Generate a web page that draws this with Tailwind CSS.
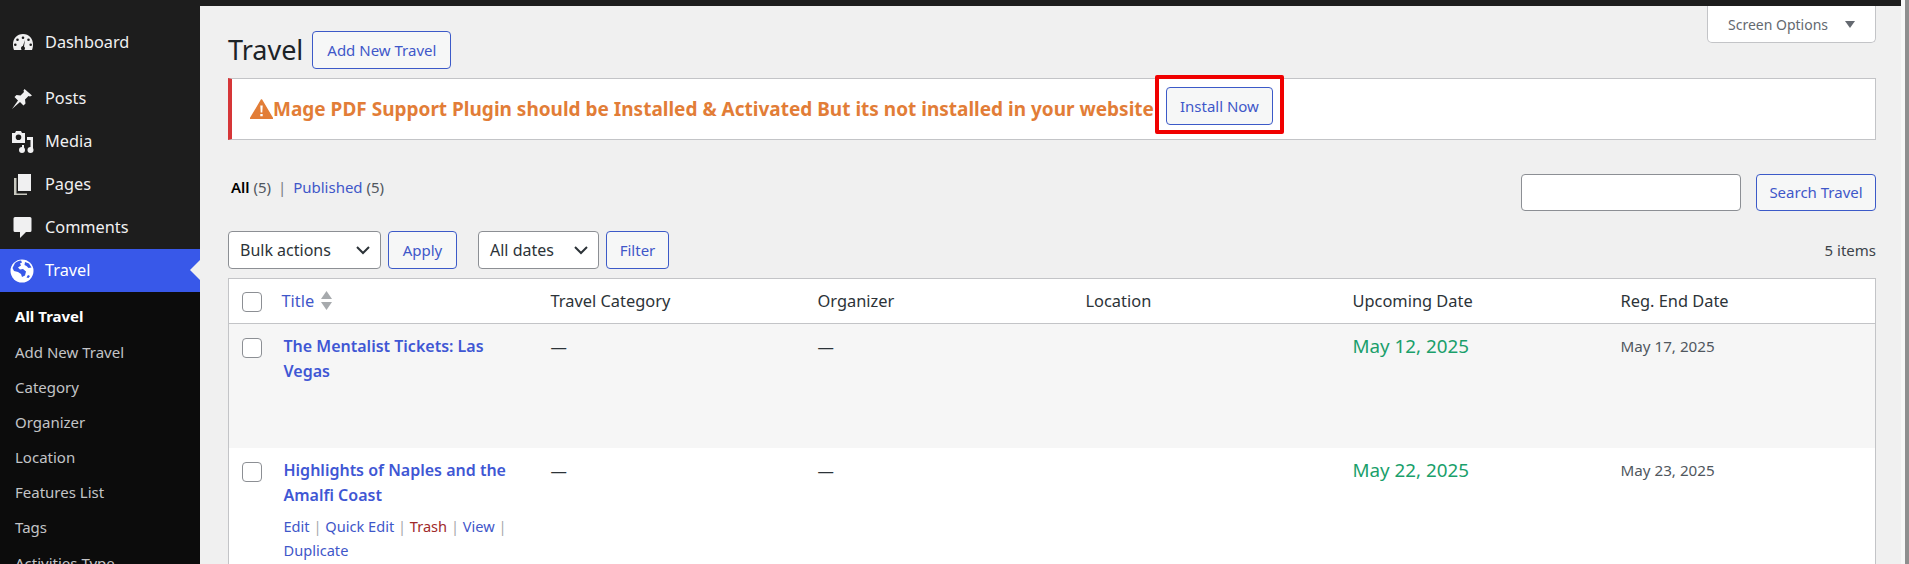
<!DOCTYPE html>
<html lang="en">
<head>
    <meta charset="UTF-8">
    <title>Travel</title>
    <script src="https://cdn.jsdelivr.net/npm/@tailwindcss/browser@4"></script>
</head>
<body class="h-[564px] overflow-hidden bg-[#f0f0f0] font-['Noto_Sans',sans-serif] text-[#2c3338]">
<div class="flex h-[564px] overflow-hidden">
    <!-- sidebar -->
    <aside class="w-[200px] shrink-0 overflow-hidden flex flex-col bg-[#1d1d1d] text-[16.3px] text-[#f0f0f1]">
        <div class="h-[24px] shrink-0"></div>
        <a class="flex items-center shrink-0 h-[37px] pl-[12px] gap-[11px]">
            <svg class="w-[22px] h-[18px]" viewBox="0 0 22 18" fill="#f0f0f1"><path fill-rule="evenodd" d="M11 0C5 0 1 4.500 1 10.500c0 2.500.5 4.500 1 5.500h18c.5-1 1-3 1-5.500C21 4.500 17 0 11 0zm0 2.500a1.300 1.300 0 1 1 0 2.600 1.300 1.300 0 0 1 0-2.600zM5.500 4.500a1.300 1.300 0 1 1 0 2.600 1.300 1.300 0 0 1 0-2.600zm11 0a1.300 1.300 0 1 1 0 2.600 1.300 1.300 0 0 1 0-2.600zM3.300 9.500a1.300 1.300 0 1 1 0 2.600 1.300 1.300 0 0 1 0-2.600zm15.400 0a1.300 1.300 0 1 1 0 2.600 1.300 1.300 0 0 1 0-2.600zM13 6l-1 6.500c.6.500 1 1.100 1 1.800 0 .7-.3 1.200-.7 1.700H9.700c-.4-.5-.7-1-.7-1.700 0-1.200.8-2 1.900-2.200z"/></svg>
            <span>Dashboard</span>
        </a>
        <div class="h-[16px] shrink-0"></div>
        <a class="flex items-center shrink-0 h-[43px] pl-[11px] gap-[12px]">
            <svg class="w-[22px] h-[22px]" viewBox="0 0 22 22" fill="#f0f0f1"><path d="M13.500 1l7.500 6.500-2 1-1.500-.5-3.500 3.500.5 4-2 2-3.500-3.500L1 21l6-8.500-3.500-3.500 2-2 4 .5L13 4l-.5-1.500z"/></svg>
            <span>Posts</span>
        </a>
        <a class="flex items-center shrink-0 h-[43px] pl-[11px] gap-[11px]">
            <svg class="w-[23px] h-[22px]" viewBox="0 0 23 22" fill="#f0f0f1"><path fill-rule="evenodd" d="M1 2h3l1-2h5l1 2h3v10H1zm6.500 1.500a2.800 2.800 0 1 0 0 5.600 2.800 2.800 0 0 0 0-5.600z"/><path d="M16 6h6v13h-2.500V9H16zM11 14h2v4h-2z"/><circle cx="11" cy="19" r="3"/><circle cx="19.500" cy="19" r="3"/></svg>
            <span>Media</span>
        </a>
        <a class="flex items-center shrink-0 h-[43px] pl-[13px] gap-[13px]">
            <svg class="w-[19px] h-[22px]" viewBox="0 0 19 22" fill="#f0f0f1"><path d="M5 0h13v17H5z"/><path d="M1 4h2.500v15.500H14V21H1z" fill="#c9c9c0"/></svg>
            <span>Pages</span>
        </a>
        <a class="flex items-center shrink-0 h-[43px] pl-[13px] gap-[13px]">
            <svg class="w-[19px] h-[21px]" viewBox="0 0 19 21" fill="#f0f0f1"><path d="M2 0h15a1.500 1.500 0 0 1 1.500 1.500v12A1.500 1.500 0 0 1 17 15h-4l-6 6v-6H2A1.500 1.500 0 0 1 .5 13.500v-12A1.500 1.500 0 0 1 2 0z"/></svg>
            <span>Comments</span>
        </a>
        <a class="relative flex items-center shrink-0 h-[43px] pl-[10px] gap-[11px] bg-[#3858e9] text-white">
            <svg class="w-[24px] h-[24px]" viewBox="0 0 24 24"><circle cx="12" cy="12" r="11.500" fill="#fff"/><path d="M5 4c2-1.500 4-2.500 6-2.500l1 2-2 1 1 2-3 2 2 2 3-.5 3 2.500-1 4-3 1.500-1-3-3-2-4-1-1.500-3 1-2zM15 3l4 1.500 2.500 4-3 .5-2-2-2-1zM18 16l2 1-1.500 2-2-.5z" fill="#3858e9"/></svg>
            <span>Travel</span>
            <span class="absolute right-0 top-[11px] border-y-[10px] border-y-transparent border-r-[10px] border-r-[#f0f0f0]"></span>
        </a>
        <nav class="flex-1 flex flex-col bg-[#0c0c0c] pt-[7px] text-[15px] text-[#c3c4c7]">
            <a class="flex items-center shrink-0 h-[35.2px] pl-[15px] font-bold text-white">All Travel</a>
            <a class="flex items-center shrink-0 h-[35.2px] pl-[15px]">Add New Travel</a>
            <a class="flex items-center shrink-0 h-[35.2px] pl-[15px]">Category</a>
            <a class="flex items-center shrink-0 h-[35.2px] pl-[15px]">Organizer</a>
            <a class="flex items-center shrink-0 h-[35.2px] pl-[15px]">Location</a>
            <a class="flex items-center shrink-0 h-[35.2px] pl-[15px]">Features List</a>
            <a class="flex items-center shrink-0 h-[35.2px] pl-[15px]">Tags</a>
            <a class="flex items-center shrink-0 h-[35.2px] pl-[15px]">Activities Type</a>
        </nav>
    </aside>

    <!-- main column -->
    <main class="flex-1 min-w-0 flex flex-col">
        <div class="h-[6px] shrink-0 bg-[#1d1d1d]"></div>
        <div class="relative pl-[28px] pr-[25px]">
            <button class="absolute right-[25px] top-0 flex items-center gap-[17px] w-[169px] h-[37px] pl-[20px] bg-white border border-t-0 border-[#c3c4c7] rounded-b-[5px] text-[14px] text-[#646970]">Screen Options <span class="border-x-[5px] border-x-transparent border-t-[7px] border-t-[#646970]"></span></button>

            <!-- heading -->
            <div class="flex items-center h-[38px] mt-[25px] gap-[9px]">
                <h1 class="text-[27px] text-[#1d2327]">Travel</h1>
                <a class="flex items-center justify-center w-[139px] h-[38px] border border-[#3c5ac8] rounded-[4px] bg-[#f6f7f7] text-[15px] text-[#3f57c9]">Add New Travel</a>
            </div>

            <!-- notice -->
            <div class="flex items-center h-[62px] mt-[9px] bg-white border border-[#c3c4c7] border-l-4 border-l-[#d63638] pl-[18px]">
                <svg class="w-[23px] h-[20px] shrink-0" viewBox="0 0 23 20"><path d="M11.500 1L22.500 19.500H.5z" fill="#e27d37" stroke="#e27d37" stroke-width="1.500" stroke-linejoin="round"/><path d="M10.300 6.500h2.400l-.4 7h-1.600zM10.300 15h2.400v2.300h-2.400z" fill="#fff"/></svg>
                <strong class="text-[19px] text-[#e27d37] whitespace-nowrap">Mage PDF Support Plugin should be Installed &amp; Activated But its not installed in your website</strong>
                <a class="relative flex items-center justify-center shrink-0 ml-[12px] w-[107px] h-[38px] -mt-[6px] border border-[#3c5ac8] rounded-[4px] bg-[#f6f7f7] text-[15px] text-[#3f57c9]">Install Now
                    <span class="absolute -left-[12px] -right-[12px] -top-[13px] -bottom-[10px] border-4 border-[#f00000] rounded-[2px]"></span>
                </a>
            </div>

            <!-- views and search -->
            <div class="flex items-start justify-between h-[57px] mt-[34px]">
                <div class="pt-[2px] pl-[3px] text-[15px] text-[#50575e]"><b class="font-semibold text-black">All</b> (5) <span class="mx-[3px] text-[#787c82]">|</span> <a class="text-[#3f57c9]">Published</a> (5)</div>
                <div class="flex gap-[15px]">
                    <input class="w-[220px] h-[37px] bg-white border border-[#8c8f94] rounded-[4px]">
                    <a class="flex items-center justify-center w-[120px] h-[37px] border border-[#3c5ac8] rounded-[4px] bg-[#f6f7f7] text-[15px] text-[#3f57c9]">Search Travel</a>
                </div>
            </div>

            <!-- bulk actions -->
            <div class="flex items-center h-[38px] gap-[7px]">
                <div class="flex items-center justify-between w-[153px] h-[38px] pl-[11px] pr-[9px] bg-white border border-[#8c8f94] rounded-[4px] text-[16px]">Bulk actions
                    <svg class="w-[16px] h-[16px]" viewBox="0 0 16 16" fill="none" stroke="#2c3338" stroke-width="2"><path d="M2 5l6 6 6-6"/></svg>
                </div>
                <a class="flex items-center justify-center w-[69px] h-[38px] border border-[#3c5ac8] rounded-[4px] bg-[#f6f7f7] text-[15px] text-[#3f57c9]">Apply</a>
                <div class="flex items-center justify-between w-[121px] h-[38px] ml-[14px] pl-[11px] pr-[9px] bg-white border border-[#8c8f94] rounded-[4px] text-[16px]">All dates
                    <svg class="w-[16px] h-[16px]" viewBox="0 0 16 16" fill="none" stroke="#2c3338" stroke-width="2"><path d="M2 5l6 6 6-6"/></svg>
                </div>
                <a class="flex items-center justify-center w-[63px] h-[38px] border border-[#3c5ac8] rounded-[4px] bg-[#f6f7f7] text-[15px] text-[#3f57c9]">Filter</a>
                <span class="ml-auto text-[15px] text-[#3c434a]">5 items</span>
            </div>

            <!-- list table -->
            <table class="table-fixed w-full mt-[9px] bg-white border border-[#c3c4c7] text-[16.4px]">
                <colgroup>
                    <col class="w-[42px]"><col class="w-[270px]"><col class="w-[267px]"><col class="w-[268px]"><col class="w-[267px]"><col class="w-[268px]"><col>
                </colgroup>
                <thead>
                    <tr class="h-[45px] border-b border-[#c3c4c7]">
                        <th class="pl-[13px] text-left font-normal"><span class="block w-[20px] h-[20px] mt-[1px] bg-white border border-[#8c8f94] rounded-[4px]"></span></th>
                        <th class="pl-[11px] text-left font-normal text-[#3f57c9]"><span class="inline-flex items-center gap-[7px]">Title
                            <svg class="w-[11px] h-[19px]" viewBox="0 0 11 19" fill="#a7aaad"><path d="M5.500 0L11 8H0zM0 11h11l-5.500 8z"/></svg></span></th>
                        <th class="pl-[10px] text-left font-normal">Travel Category</th>
                        <th class="pl-[10px] text-left font-normal">Organizer</th>
                        <th class="pl-[10px] text-left font-normal">Location</th>
                        <th class="pl-[10px] text-left font-normal">Upcoming Date</th>
                        <th class="pl-[10px] text-left font-normal">Reg. End Date</th>
                    </tr>
                </thead>
                <tbody class="align-top">
                    <tr class="h-[124px] bg-[#f6f6f6]">
                        <td class="pl-[13px] pt-[14px]"><span class="block w-[20px] h-[20px] bg-white border border-[#8c8f94] rounded-[4px]"></span></td>
                        <td class="pl-[13px] pr-[10px] pt-[10px] text-[16px] font-semibold leading-[25px] text-[#3f57d4]">The Mentalist Tickets: Las Vegas</td>
                        <td class="pl-[10px] pt-[10px] leading-[25px]">—</td>
                        <td class="pl-[10px] pt-[10px] leading-[25px]">—</td>
                        <td></td>
                        <td class="pl-[10px] pt-[10px] text-[18.8px] leading-[25px] text-[#1a9f6b]">May 12, 2025</td>
                        <td class="pl-[10px] pt-[10px] text-[15.2px] leading-[25px] text-[#50575e]">May 17, 2025</td>
                    </tr>
                    <tr class="h-[200px]">
                        <td class="pl-[13px] pt-[14px]"><span class="block w-[20px] h-[20px] bg-white border border-[#8c8f94] rounded-[4px]"></span></td>
                        <td class="pl-[13px] pr-[10px] pt-[10px] text-[16px] font-semibold leading-[25px] text-[#3f57d4]">Highlights of Naples and the Amalfi Coast
                            <div class="mt-[6px] text-[14.6px] font-normal leading-[24px] text-[#3f57c9]">Edit <span class="text-[#a7aaad]">|</span> Quick Edit <span class="text-[#a7aaad]">|</span> <span class="text-[#a02a2a]">Trash</span> <span class="text-[#a7aaad]">|</span> View <span class="text-[#a7aaad]">|</span> Duplicate</div>
                        </td>
                        <td class="pl-[10px] pt-[10px] leading-[25px]">—</td>
                        <td class="pl-[10px] pt-[10px] leading-[25px]">—</td>
                        <td></td>
                        <td class="pl-[10px] pt-[10px] text-[18.8px] leading-[25px] text-[#1a9f6b]">May 22, 2025</td>
                        <td class="pl-[10px] pt-[10px] text-[15.2px] leading-[25px] text-[#50575e]">May 23, 2025</td>
                    </tr>
                </tbody>
            </table>
        </div>
    </main>

    <!-- browser scrollbar edge -->
    <div class="w-[8px] shrink-0 bg-[#8f8f8f] border-l-[4px] border-l-[#f7f7f7]"></div>
</div>
</body>
</html>
